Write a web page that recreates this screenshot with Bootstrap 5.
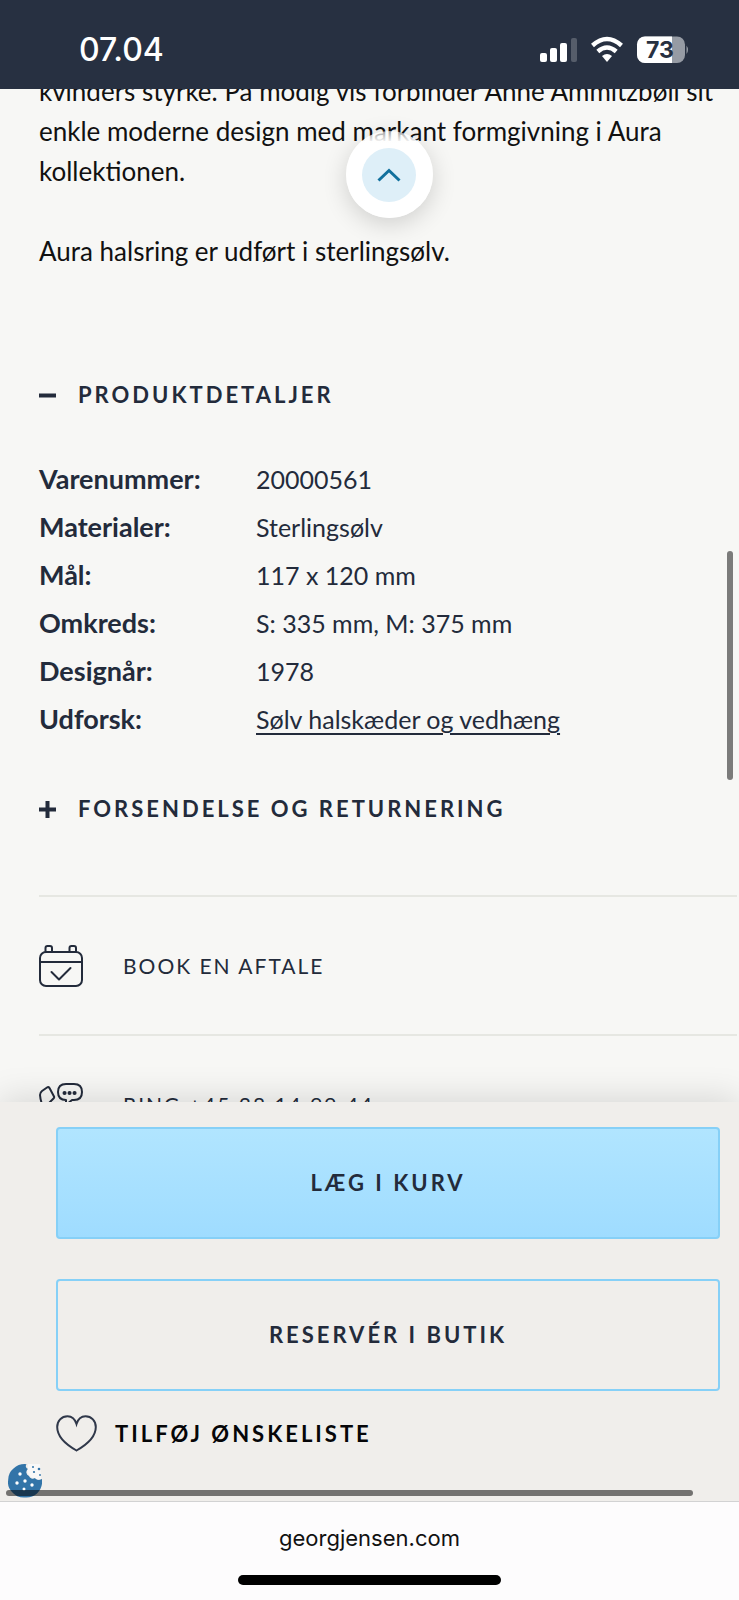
<!DOCTYPE html>
<html lang="da">
<head>
<meta charset="utf-8">
<meta name="viewport" content="width=device-width, initial-scale=1">
<title>Georg Jensen – Aura halsring</title>
<link href="https://cdn.jsdelivr.net/npm/bootstrap@5.3.0/dist/css/bootstrap.min.css" rel="stylesheet">
<style>
  :root { --ink: #232b3b; --navy: #273041; --paper: #f7f7f5; --dock: #f0eeeb; --sky: #86d0f7; }
  body { font-family: Lato, "Liberation Sans", sans-serif; background: var(--paper); color: var(--ink); }
  .status-bar { background: var(--navy); height: 89px; padding: 10px 50px 0 79px; font-family: Inter, "Liberation Sans", sans-serif; }
  .clock { font-size: 32px; font-weight: 500; line-height: 40px; }
  .page-view { min-height: 0; }
  .gutter { padding-left: 39px; }
  .scrolled { margin-top: -18px; }
  .story { font-size: 26px; line-height: 40px; color: #111; margin-bottom: 40px; }
  .to-top { top: 42px; left: 39px; right: 0; width: 87px; height: 87px; background: linear-gradient(rgba(255,255,255,.6), #fff 14%); box-shadow: 0 6px 24px rgba(0,0,0,.16); }
  .to-top-disc { width: 54px; height: 54px; background: #deeff8; }
  .caps { font-size: 22px; line-height: 32px; letter-spacing: 3px; font-weight: 700; color: inherit; }
  .fold { gap: 22px; }
  .first-fold { padding-top: 68px; }
  .facts { font-size: 25px; line-height: 32px; margin: 44px 0 50px; }
  .facts th, .facts td { padding: 8px 0; font-weight: 400; vertical-align: top; }
  .facts th { width: 31%; font-size: 27px; font-weight: 700; }
  .facts a { color: inherit; text-underline-offset: 4px; text-decoration-thickness: 2px; }
  .services { margin: 70px 2px 0 0; }
  .service { border-top: 2px solid #e6e7e2; height: 139px; gap: 40px; font-size: 21px; letter-spacing: 2px; font-weight: 400; }
  .dock { background: var(--dock); padding: 25px 19px 0 56px; height: 399px; box-shadow: 0 -4px 32px rgba(0,0,0,.13); }
  .btn-buy { height: 112px; border: 2px solid var(--sky); border-radius: 4px; color: var(--ink); }
  .btn-buy:hover { border-color: var(--sky); color: var(--ink); }
  .btn-buy + .btn-buy { margin-top: 40px; }
  .btn-fill { background: linear-gradient(#b1e5ff, #9fdcff); }
  .wish { gap: 18px; color: #060608; }
  .thumb-v { top: 462px; right: 6px; width: 6px; height: 229px; background: #7b7b7a; }
  .thumb-h { left: 6px; right: 46px; bottom: 5px; height: 6px; background: rgba(0,0,0,.52); }
  .cookie { left: 8px; bottom: 3px; }
  .browser-bar { background: #fdfcfd; border-top: 1px solid #d2d2d3; height: 99px; padding-top: 21px; font: 22px/30px Inter, "Liberation Sans", sans-serif; color: #111; }
  .home-bar { width: 263px; height: 10px; background: #000; margin-bottom: 15px; }
</style>
</head>
<body class="vh-100 d-flex flex-column overflow-hidden">

<header class="status-bar d-flex align-items-center justify-content-between text-white flex-shrink-0">
  <span class="clock">07.04</span>
  <svg width="150" height="28" viewBox="0 0 150 28" role="img" aria-label="Signal, wifi, batteri 73 %">
    <g fill="#fff">
      <rect x="1" y="17" width="7" height="9" rx="2"/>
      <rect x="11" y="12" width="7" height="14" rx="2"/>
      <rect x="21" y="7" width="7" height="19" rx="2"/>
      <rect x="32" y="2" width="6" height="24" rx="2" opacity=".22"/>
    </g>
    <g fill="none" stroke="#fff" stroke-width="4.4">
      <path d="M53.500 9.500Q68-3.500 82.500 9.500"/>
      <path d="M58.800 15.500Q68 7.500 77.200 15.500"/>
    </g>
    <path d="M63 20Q68 16 73 20L68 26Z" fill="#fff"/>
    <rect x="98" y="0.500" width="48" height="26.500" rx="8" fill="#969ba4"/>
    <path d="M106 .5H133V27H106A8 8 0 0 1 98 19V8.500A8 8 0 0 1 106 .5Z" fill="#fff"/>
    <path d="M147.500 9.500Q150.500 13.500 147.500 18Z" fill="#969ba4"/>
    <text x="121" y="22" text-anchor="middle" font-family="Inter, sans-serif" font-size="23" font-weight="700" fill="#273041">73</text>
  </svg>
</header>

<main class="page-view flex-grow-1 position-relative">
  <div class="h-100 overflow-hidden">
    <div class="scrolled gutter">
      <p class="story">kvinders styrke. På modig vis forbinder Anne Ammitzbøll sit enkle moderne design med markant formgivning i Aura kollektionen.</p>
      <p class="story">Aura halsring er udført i sterlingsølv.</p>

      <h2 class="first-fold m-0 d-flex">
        <button type="button" class="caps fold btn p-0 border-0 d-flex align-items-center" aria-expanded="true">
          <svg width="17" height="17" aria-hidden="true"><path d="M0 8.500H17" stroke="currentColor" stroke-width="4"/></svg>
          PRODUKTDETALJER
        </button>
      </h2>
      <table class="facts w-100">
        <tr><th scope="row">Varenummer:</th><td>20000561</td></tr>
        <tr><th scope="row">Materialer:</th><td>Sterlingsølv</td></tr>
        <tr><th scope="row">Mål:</th><td>117 x 120 mm</td></tr>
        <tr><th scope="row">Omkreds:</th><td>S: 335 mm, M: 375 mm</td></tr>
        <tr><th scope="row">Designår:</th><td>1978</td></tr>
        <tr><th scope="row">Udforsk:</th><td><a href="#">Sølv halskæder og vedhæng</a></td></tr>
      </table>
      <h2 class="m-0 d-flex">
        <button type="button" class="caps fold btn p-0 border-0 d-flex align-items-center" aria-expanded="false">
          <svg width="17" height="17" aria-hidden="true"><path d="M0 8.500H17M8.500 0V17" stroke="currentColor" stroke-width="4"/></svg>
          FORSENDELSE OG RETURNERING
        </button>
      </h2>

      <nav class="services">
        <a href="#" class="service caps d-flex align-items-center text-decoration-none">
          <svg width="44" height="44" viewBox="0 0 44 44" fill="none" stroke="currentColor" stroke-width="2" stroke-linecap="round" stroke-linejoin="round" aria-hidden="true">
            <rect x="1" y="8" width="42" height="34" rx="6"/>
            <path d="M1 18H43M6.500 8V4Q6.500 2 8.500 2H11Q13 2 13 4V8M30.500 8V4Q30.500 2 32.500 2H35Q37 2 37 4V8M12.500 28L20 35.500L31.500 24"/>
          </svg>
          BOOK EN AFTALE
        </a>
        <a href="tel:+4538149944" class="service caps d-flex align-items-center text-decoration-none">
          <svg width="44" height="44" viewBox="0 0 44 44" fill="none" stroke="currentColor" stroke-width="2" stroke-linecap="round" stroke-linejoin="round" aria-hidden="true">
            <path d="M10 20L14.500 15.500Q15.500 14.500 15 13.500L10.500 5Q9.500 3.500 8 4.500L3 8Q1 9.500 1 12Q2 24 11 33Q21 42 33 42L38 36L28 29L24 33Q14 29 10 20Z"/>
            <path d="M27 1H35Q43 1 43 9T35 17H33L27 22V17Q19 17 19 9T27 1Z"/>
            <path d="M25.500 10H25.600M30.500 10H30.600M35.500 10H35.600" stroke-width="4"/>
          </svg>
          RING +45 38 14 99 44
        </a>
      </nav>
    </div>
  </div>
  <button type="button" class="to-top btn p-0 border-0 rounded-circle position-absolute mx-auto d-flex align-items-center justify-content-center" aria-label="Til toppen">
    <span class="to-top-disc rounded-circle d-flex align-items-center justify-content-center">
      <svg width="24" height="14" viewBox="0 0 24 14" fill="none" stroke="#11709d" stroke-width="3" aria-hidden="true"><path d="M1.500 12.500L12 2.500L22.500 12.500"/></svg>
    </span>
  </button>
  <div class="thumb-v position-absolute rounded-pill"></div>
</main>

<section class="dock position-relative flex-shrink-0 d-flex flex-column">
  <button type="button" class="btn btn-buy btn-fill caps w-100 flex-shrink-0">LÆG I KURV</button>
  <button type="button" class="btn btn-buy caps w-100 flex-shrink-0">RESERVÉR I BUTIK</button>
  <button type="button" class="btn wish caps p-0 border-0 d-flex align-items-center align-self-start mt-4">
    <svg width="41" height="37" viewBox="0 0 41 37" fill="none" stroke="#30384a" stroke-width="2" aria-hidden="true"><path d="M20.500 9C19 4 15.500 1.200 11.500 1.200C5.500 1.200 1.200 6 1.200 12C1.200 21 9 29 20.500 35.500C32 29 39.800 21 39.800 12C39.800 6 35.500 1.200 29.500 1.200C25.500 1.200 22 4 20.500 9Z"/></svg>
    TILFØJ ØNSKELISTE
  </button>
  <svg class="cookie position-absolute" width="34" height="35" viewBox="0 0 34 35" aria-hidden="true">
    <path d="M18.500 1.200A3 3 0 0 0 20 6A4 4 0 0 0 21 13A4 4 0 0 0 27 15Q30 18 34 16Q35 25 29 30.500Q24 35 17 34.500Q9 35 4 29Q-1 24 .2 17Q0 10 5.500 5.500Q11 .5 18.500 1.200Z" fill="#3274a8"/>
    <path d="M20 1H32L33 16Q29 18 27 15Q22 15 21 12Q18 8 20 6Z" fill="#f8f8f8"/>
    <g fill="#fff"><circle cx="12" cy="11" r="1.700"/><circle cx="9" cy="20" r="1.700"/><circle cx="17" cy="18" r="1.700"/><circle cx="24" cy="22" r="1.700"/><circle cx="16" cy="26" r="1.500"/></g>
    <g fill="#3274a8"><circle cx="25" cy="4" r="1"/><circle cx="31" cy="6" r="1.300"/><circle cx="26" cy="9" r="1.100"/><circle cx="32" cy="12" r=".9"/></g>
  </svg>
  <div class="thumb-h position-absolute rounded-pill"></div>
</section>

<footer class="browser-bar position-relative flex-shrink-0 d-flex flex-column align-items-center justify-content-between">
  <span>georgjensen.com</span>
  <div class="home-bar rounded-pill"></div>
</footer>

<script src="https://cdn.jsdelivr.net/npm/bootstrap@5.3.0/dist/js/bootstrap.bundle.min.js"></script>
</body>
</html>
